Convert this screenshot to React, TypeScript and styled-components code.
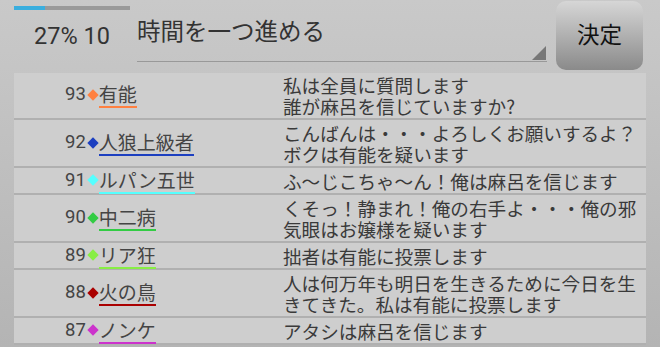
import React from 'react';
import styled, { createGlobalStyle } from 'styled-components';

interface Message {
  no: number;
  name: string;
  color: string;
  text: string[];
}

const messages: Message[] = [
  { no: 93, name: '有能', color: '#ff8040', text: ['私は全員に質問します', '誰が麻呂を信じていますか?'] },
  { no: 92, name: '人狼上級者', color: '#1c3fc0', text: ['こんばんは・・・よろしくお願いするよ？', 'ボクは有能を疑います'] },
  { no: 91, name: 'ルパン五世', color: '#55ffff', text: ['ふ〜じこちゃ〜ん！俺は麻呂を信じます'] },
  { no: 90, name: '中二病', color: '#33cc44', text: ['くそっ！静まれ！俺の右手よ・・・俺の邪', '気眼はお嬢様を疑います'] },
  { no: 89, name: 'リア狂', color: '#88ee44', text: ['拙者は有能に投票します'] },
  { no: 88, name: '火の鳥', color: '#aa0000', text: ['人は何万年も明日を生きるために今日を生', 'きてきた。私は有能に投票します'] },
  { no: 87, name: 'ノンケ', color: '#cc33cc', text: ['アタシは麻呂を信じます'] },
];

const App: React.FC = () => {
  const progress = 27;
  return (
    <>
      <GlobalStyle />
      <Page>
        <Header>
          <Status>
            <Progress>
              <ProgressFill style={{ width: `${progress}%` }} />
            </Progress>
            <StatusText>
              {progress}% 10
            </StatusText>
          </Status>
          <Select>
            <SelectText>時間を一つ進める</SelectText>
            <SelectArrow />
          </Select>
          <DecideButton>決定</DecideButton>
        </Header>
        <List>
          {messages.map((m) => (
            <Row key={m.no}>
              <Speaker>
                <Number>{m.no}</Number>
                <Diamond $color={m.color} />
                <Name $color={m.color}>{m.name}</Name>
              </Speaker>
              <Body>
                {m.text.map((line, i) => (
                  <Line key={i}>{line}</Line>
                ))}
              </Body>
            </Row>
          ))}
        </List>
      </Page>
    </>
  );
};

export default App;

// --- Styled Components ---
const GlobalStyle = createGlobalStyle`
  html, body {
    margin: 0;
    padding: 0;
    height: 100%;
  }
  body {
    background: linear-gradient(to bottom, #c9c9c9, #b4b4b4);
    font-family: Roboto, "Noto Sans CJK JP", sans-serif;
    color: #3a3a3a;
  }
`;

const Page = styled.div`
  width: 660px;
  height: 347px;
  overflow: hidden;
  padding-left: 14px;
  box-sizing: border-box;
`;

const Header = styled.div`
  display: flex;
  height: 73px;
  width: 632px;
`;

const Status = styled.div`
  width: 123px;
  padding-top: 6px;
  display: flex;
  flex-direction: column;
`;

const Progress = styled.div`
  width: 116px;
  height: 4px;
  background: #9a9a9a;
`;

const ProgressFill = styled.div`
  height: 100%;
  background: #3aaede;
`;

const StatusText = styled.div`
  margin-top: 12px;
  padding-left: 20px;
  font-size: 23.5px;
  line-height: 28px;
  color: #333;
`;

const Select = styled.div`
  position: relative;
  width: 410px;
  height: 62px;
  border-bottom: 1px solid #999;
  box-sizing: border-box;
`;

const SelectText = styled.div`
  padding-top: 15px;
  font-family: "Noto Sans CJK JP", sans-serif;
  font-size: 23.5px;
  line-height: 30px;
  color: #333;
`;

const SelectArrow = styled.div`
  position: absolute;
  right: 1px;
  bottom: 1px;
  width: 0;
  height: 0;
  border-left: 14px solid transparent;
  border-bottom: 14px solid #777;
`;

const DecideButton = styled.button`
  margin: 1px 0 0 9px;
  width: 87px;
  height: 69px;
  border: none;
  border-radius: 10px;
  background: linear-gradient(to bottom, #d6d6d6 0%, #b4b4b4 45%, #8a8a8a 100%);
  font-family: "Noto Sans CJK JP", sans-serif;
  font-size: 22.5px;
  color: #111;
  padding: 0 0 6px;
`;

const List = styled.div`
  width: 632px;
  background: #cecece;
`;

const Row = styled.div`
  display: grid;
  grid-template-columns: 269px 1fr;
  align-items: center;
  border-bottom: 2px solid #b0b0b0;
  padding: 2px 0 2px;
  &:first-child {
    padding-top: 1px;
  }
`;

const Speaker = styled.div`
  display: flex;
  align-items: center;
  margin: -2px 0 -4px;
  padding-left: 51px;
  font-size: 18.5px;
  line-height: 19px;
  color: #444;
`;

const Number = styled.span`
  margin-bottom: 3px;
`;

const Diamond = styled.span<{ $color: string }>`
  display: inline-block;
  width: 8px;
  height: 8px;
  margin: 0 2px 3px 3px;
  background: ${(p) => p.$color};
  transform: rotate(45deg);
`;

const Name = styled.span<{ $color: string }>`
  font-family: "Noto Sans CJK JP", sans-serif;
  font-size: 19px;
  line-height: 19px;
  padding-bottom: 3px;
  border-bottom: 2px solid ${(p) => p.$color};
`;

const Body = styled.div`
  font-family: "Noto Sans CJK JP", sans-serif;
  font-size: 18.6px;
  color: #3a3a3a;
`;

const Line = styled.div`
  height: 21px;
  line-height: 21px;
  white-space: nowrap;
`;
